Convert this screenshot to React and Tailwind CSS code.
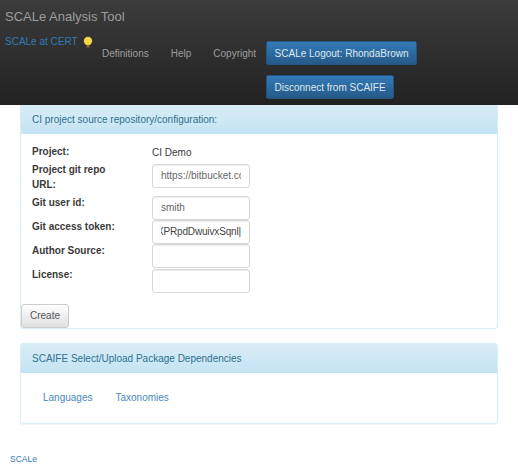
const inputBase = "w-[98px] h-[24px] rounded-[3px] border border-[#d8d8d8] bg-white shadow-[inset_0_1px_1px_rgba(0,0,0,0.07)] text-[10px] text-[#666] overflow-hidden whitespace-nowrap flex items-center px-[8px] pb-[1px]";

function Row({ label, h, children, tight }) {
  return (
    <div className="flex items-start" style={{ height: h }}>
      <div className={`w-[120px] pr-[20px] font-bold text-[10px] leading-[14.5px] text-[#3a3a3a] ${tight ? "-mt-[1px]" : ""}`}>{label}</div>
      {children}
    </div>
  );
}

function NavLink({ children }) {
  return <a className="text-[10px] text-[#9d9d9d]">{children}</a>;
}

function NavButton({ children }) {
  return (
    <a className="h-[24px] px-[7.5px] flex items-center rounded-[2px] border border-[#245580] bg-gradient-to-b from-[#337ab7] to-[#265a88] text-[10px] text-[#dfe8f0] whitespace-nowrap">
      {children}
    </a>
  );
}

export default function App() {
  return (
    <div className="w-[518px] h-[470px] overflow-hidden bg-white font-['Liberation_Sans',Arial,sans-serif]">
      <header className="h-[105px] bg-gradient-to-b from-[#3c3c3c] to-[#222222] flex pl-[5px]">
        <div className="w-[97px] shrink-0">
          <div className="pt-[9px] text-[13px] leading-[16px] text-[#9d9d9d] whitespace-nowrap">SCALe Analysis Tool</div>
          <div className="mt-[10px] flex items-center gap-[5px] whitespace-nowrap">
            <a className="text-[10px] leading-[14px] text-[#337ab7]">SCALe at CERT</a>
            <svg width="10" height="13" viewBox="0 0 10 13" className="mt-[1px]">
              <circle cx="5" cy="5" r="4.2" fill="#f7d649" />
              <rect x="3.2" y="9.2" width="3.6" height="2.4" rx="1" fill="#7a6a3a" />
            </svg>
          </div>
        </div>
        <div className="flex flex-col pt-[41px] gap-[10px]">
          <div className="flex items-center gap-[22px]">
            <NavLink>Definitions</NavLink>
            <NavLink>Help</NavLink>
            <NavLink>Copyright</NavLink>
            <div className="-ml-[12px]">
              <NavButton>SCALe Logout: RhondaBrown</NavButton>
            </div>
          </div>
          <div className="pl-[164px] flex">
            <NavButton>Disconnect from SCAIFE</NavButton>
          </div>
        </div>
      </header>

      <main className="px-[20px]">
        <section className="h-[223.5px] border border-t-0 border-[#d9edf7] rounded-b-[3px] flex flex-col">
          <div className="h-[29px] shrink-0 px-[11px] pb-[1px] flex items-center bg-gradient-to-b from-[#d9edf7] to-[#c4e3f3] text-[10px] text-[#31708f]">
            CI project source repository/configuration:
          </div>
          <div className="pl-[11px] pt-[11px]">
            <Row label="Project:" h={19}>
              <div className="text-[10px] leading-[15px] text-[#3a3a3a]">CI Demo</div>
            </Row>
            <Row tight label={<>Project git repo<br />URL:</>} h={32}>
              <div className={inputBase}>
                <span className="block w-full overflow-hidden">https://bitbucket.com</span>
              </div>
            </Row>
            <Row label="Git user id:" h={24}>
              <div className={inputBase}>smith</div>
            </Row>
            <Row label="Git access token:" h={24}>
              <div className={`${inputBase} border-[#79b0df] shadow-[0_0_4px_rgba(102,175,233,0.6)]`}>
                <span className="w-full overflow-hidden flex justify-end">
                  <span className="shrink-0 tracking-[-0.15px] text-[#444]">XPRpdDwuivxSqnl|</span>
                </span>
              </div>
            </Row>
            <Row label="Author Source:" h={25}>
              <div className={inputBase}></div>
            </Row>
            <Row tight label="License:" h={24}>
              <div className={inputBase}></div>
            </Row>
          </div>
          <div className="mt-auto">
            <button className="block h-[24px] w-[48px] rounded-[3px] border border-[#ccc] bg-gradient-to-b from-[#ffffff] to-[#e0e0e0] text-[10px] text-[#555]">
              Create
            </button>
          </div>
        </section>

        <section className="mt-[14.5px] h-[81px] border border-[#d9edf7] rounded-[3px] flex flex-col shadow-[0_1px_1px_rgba(0,0,0,0.05)]">
          <div className="h-[29px] shrink-0 px-[11px] pb-[1px] flex items-center bg-gradient-to-b from-[#d9edf7] to-[#c4e3f3] text-[10px] text-[#31708f]">
            SCAIFE Select/Upload Package Dependencies
          </div>
          <div className="flex gap-[23px] pl-[22px] pt-[18px] text-[10px] leading-[14px] text-[#4a87bd]">
            <a>Languages</a>
            <a>Taxonomies</a>
          </div>
        </section>
      </main>

      <footer className="pl-[10px] mt-[29px] text-[8.5px] leading-[12px] text-[#337ab7]">SCALe</footer>
    </div>
  );
}
